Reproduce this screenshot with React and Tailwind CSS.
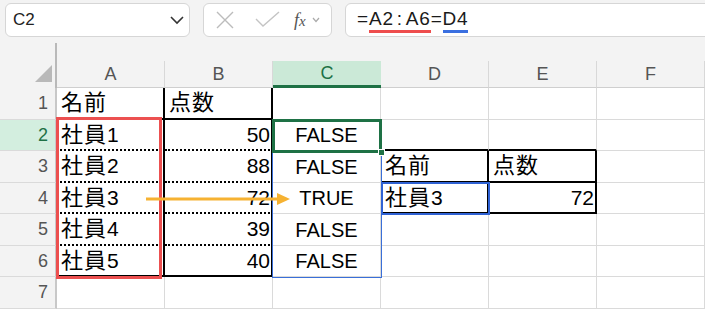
import React from 'react';

const FONT = { fontFamily: '"Liberation Sans", "Noto Sans CJK JP", sans-serif' };

const cols = ['A', 'B', 'C', 'D', 'E', 'F'];

const data = {
  1: { A: ['名前', ''], B: ['点数', ''] },
  2: { A: ['社員', '1'], B: '50', C: 'FALSE' },
  3: { A: ['社員', '2'], B: '88', C: 'FALSE', D: ['名前', ''], E: ['点数', ''] },
  4: { A: ['社員', '3'], B: '72', C: 'TRUE', D: ['社員', '3'], E: '72' },
  5: { A: ['社員', '4'], B: '39', C: 'FALSE' },
  6: { A: ['社員', '5'], B: '40', C: 'FALSE' },
  7: {},
};

const rowHeights = { 1: 'h-[32px]', 2: 'h-[31px]', 3: 'h-[32px]', 4: 'h-[31px]', 5: 'h-[32px]', 6: 'h-[31px]', 7: 'h-[32px]' };

const gridR = 'border-r border-r-[#dadada]';
const blackR = 'border-r-2 border-r-black';
const gridB = 'border-b border-b-[#dadada]';
const blackB = 'border-b-2 border-b-black';
const dotB = 'border-b-2 border-b-black [border-bottom-style:dotted]';

function cellBorders(r, c) {
  let right = gridR;
  let bottom = gridB;
  if ((c === 'A' || c === 'B') && r <= 6) right = blackR;
  if (c === 'A' || c === 'B') {
    if (r === 1 || r === 6) bottom = blackB;
    else if (r >= 2 && r <= 5) bottom = dotB;
  }
  if ((c === 'D' || c === 'E') && (r === 2 || r === 3 || r === 4)) bottom = blackB;
  if ((c === 'D' || c === 'E') && (r === 3 || r === 4)) right = blackR;
  return right + ' ' + bottom;
}

function align(r, c) {
  if (c === 'C') return 'justify-center text-[20px]';
  if (c === 'B' && r >= 2) return 'justify-end pr-[1px] text-[21px]';
  if (c === 'E' && r === 4) return 'justify-end pr-[1px] text-[21px]';
  return 'justify-start pl-[4px] text-[21px]';
}

function CellText({ value }) {
  if (Array.isArray(value)) {
    return (
      <span className="flex items-baseline">
        <span className="text-[22px] leading-[28px] tracking-[1px]">{value[0]}</span>
        {value[1]}
      </span>
    );
  }
  return <span>{value}</span>;
}

function TopBar() {
  return (
    <div className="flex h-[43px] items-start gap-[13px] overflow-hidden bg-[#f3f3f3] pl-[5px] pt-[3px]">
      <div className="flex h-[34px] w-[185px] shrink-0 items-center justify-between rounded-[6px] border border-[#d6d6d6] bg-white pl-[7px] pr-[4px]">
        <span className="text-[17px] text-[#222]">C2</span>
        <svg width="16" height="10" viewBox="0 0 16 10">
          <path d="M2 2 L8 8 L14 2" fill="none" stroke="#333" strokeWidth="1.6" />
        </svg>
      </div>
      <div className="flex h-[34px] w-[129px] shrink-0 items-center rounded-[6px] border border-[#d6d6d6] bg-white pl-[11px]">
        <svg width="20" height="18" viewBox="0 0 20 18">
          <path d="M2 1 L18 17 M18 1 L2 17" stroke="#bcbcbc" strokeWidth="1.4" />
        </svg>
        <svg className="ml-[20px]" width="25" height="18" viewBox="0 0 25 18">
          <path d="M1 8 L8 15 L24 1" fill="none" stroke="#c4c4c4" strokeWidth="1.4" />
        </svg>
        <span
          className="ml-[14px] text-[18px] italic text-[#555]"
          style={{ fontFamily: '"Liberation Serif", serif' }}
        >
          f<span className="text-[15px]">x</span>
        </span>
        <svg className="ml-[6px]" width="8" height="6" viewBox="0 0 8 6">
          <path d="M1 1 L4 4.5 L7 1" fill="none" stroke="#aaa" strokeWidth="1.2" />
        </svg>
      </div>
      <div className="relative flex h-[34px] w-[400px] shrink-0 items-center rounded-[6px] border border-[#d6d6d6] bg-white pl-[11px]">
        <span className="text-[19px] leading-[23px] tracking-[0.8px] text-[#1a1a1a]">
          =<span className="inline-block border-b-[3px] border-[#ee4d4d]">A2<span className="mx-[3px]">:</span>A6</span>=<span className="inline-block border-b-[3px] border-[#3a6fe0]">D4</span>
        </span>
      </div>
    </div>
  );
}

export default function App() {
  return (
    <div className="relative h-[310px] w-[705px] overflow-hidden bg-white" style={FONT}>
      <TopBar />
      <div className="relative grid grid-cols-[57px_repeat(6,108px)]">
        {/* spacer + corner */}
        <div className="relative row-span-2 h-[45px] border-r-2 border-r-[#b9b9b9] bg-[#f3f3f3]">
          <svg className="absolute bottom-[6px] right-[3px]" width="17" height="17" viewBox="0 0 17 17">
            <polygon points="17,0 17,17 0,17" fill="#b9b9b9" />
          </svg>
        </div>
        <div className="col-span-6 h-[18px] bg-[#f3f3f3]" />
        {cols.map((c) =>
          c === 'C' ? (
            <div
              key={c}
              className="flex h-[27px] items-center justify-center border-b-[3px] border-b-[#1e7145] bg-[#cbe9d7] text-[18px] text-[#1e7145]"
            >
              {c}
            </div>
          ) : (
            <div
              key={c}
              className="flex h-[27px] items-center justify-center border-r border-b border-r-[#d8d8d8] border-b-[#cfcfcf] bg-[#f3f3f3] text-[18px] text-[#555]"
            >
              {c}
            </div>
          )
        )}
        {[1, 2, 3, 4, 5, 6, 7].map((r) => (
          <React.Fragment key={r}>
            <div
              className={
                'flex items-center justify-end border-r-2 border-b border-r-[#c8c8c8] border-b-[#dadada] pr-[7px] text-[18px] ' +
                rowHeights[r] +
                (r === 2 ? ' bg-[#d3eedf] text-[#1e7145]' : ' bg-[#f3f3f3] text-[#555]')
              }
            >
              {r}
            </div>
            {cols.map((c) => (
              <div
                key={c}
                className={'flex items-center text-black ' + rowHeights[r] + ' ' + cellBorders(r, c) + ' ' + align(r, c)}
              >
                {data[r][c] ? <CellText value={data[r][c]} /> : null}
              </div>
            ))}
          </React.Fragment>
        ))}

        {/* red reference range A2:A6 */}
        <div className="pointer-events-none absolute left-[56px] top-[74px] h-[162px] w-[106px] border-[3px] border-[#ec5050]" />
        {/* spill range C2:C6 */}
        <div className="pointer-events-none absolute left-[272px] top-[77px] h-[158px] w-[110px] border border-[#3a6fd8]" />
        {/* active cell C2 */}
        <div className="pointer-events-none absolute left-[272px] top-[76px] h-[34px] w-[110px] border-[3px] border-[#1e7145]" />
        <div className="pointer-events-none absolute left-[378px] top-[106px] h-[7px] w-[7px] border border-white bg-[#1e7145]" />
        {/* D4 reference */}
        <div className="pointer-events-none absolute left-[381px] top-[139px] h-[33px] w-[109px] border-2 border-[#2f62d4]" />
        {/* arrow */}
        <svg className="pointer-events-none absolute left-[144px] top-[148px]" width="150" height="16" viewBox="0 0 150 16">
          <line x1="2" y1="8" x2="134" y2="8" stroke="#f6b232" strokeWidth="3" />
          <polygon points="133,2 146,8 133,14" fill="#f6b232" />
        </svg>
      </div>
    </div>
  );
}
